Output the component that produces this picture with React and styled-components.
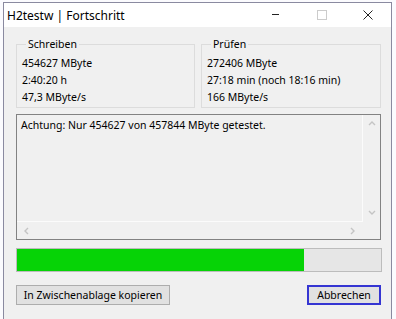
import React from "react";
import styled, { createGlobalStyle } from "styled-components";

const Global = createGlobalStyle`
  html, body { margin: 0; padding: 0; background: #fbfbfe; overflow: hidden; }
  body { font-family: "Noto Sans", "Open Sans", sans-serif; }
`;

const Window = styled.div`
  margin: 2px 0 0 3px;
  width: 387px;
  height: 317px;
  border: 1px solid #8a8aa0;
  border-bottom: none;
  background: #f0f0f0;
  display: flex;
  flex-direction: column;
  overflow: hidden;
`;

const TitleBar = styled.div`
  height: 24px;
  flex: none;
  background: #ffffff;
  display: flex;
  align-items: center;
  padding-left: 3px;
  font-size: 12px;
  color: #000;
`;

const Title = styled.div`
  flex: 1;
  white-space: nowrap;
`;

const Ctrl = styled.div`
  width: ${(p) => p.$w}px;
  height: 24px;
  display: flex;
  align-items: center;
  justify-content: center;
`;

const Client = styled.div`
  padding: 10px 10px 0 12px;
  display: flex;
  flex-direction: column;
  font-size: 10.5px;
  color: #000;
`;

const Groups = styled.div`
  display: grid;
  grid-template-columns: 179px 180px;
  column-gap: 6px;
`;

const Group = styled.fieldset`
  margin: 0;
  padding: 3px 5px 1px 5px;
  border: 1px solid #dcdcdc;
  min-width: 0;
`;

const Legend = styled.legend`
  padding: 0 2px;
  margin-left: 4px;
  line-height: 15px;
`;

const Line = styled.div`
  line-height: 17px;
  white-space: nowrap;
`;

const Memo = styled.div`
  margin-top: 6px;
  height: 124px;
  border: 1px solid #828282;
  display: grid;
  grid-template-columns: 1fr 17px;
  grid-template-rows: 1fr 17px;
`;

const MemoText = styled.div`
  padding: 3px 4px;
  line-height: 15px;
  white-space: nowrap;
  border-right: 1px solid #fbfbfb;
  border-bottom: 1px solid #fbfbfb;
`;

const VBar = styled.div`
  display: flex;
  flex-direction: column;
  justify-content: space-between;
  align-items: center;
  padding: 5px 0;
`;

const HBar = styled.div`
  display: flex;
  justify-content: space-between;
  align-items: center;
  padding: 0 6px;
`;

const Progress = styled.div`
  margin-top: 8px;
  height: 22px;
  width: 364px;
  border: 1px solid #bcbcbc;
  background: #e6e6e6;
  display: flex;
`;

const Fill = styled.div`
  background: #06d306;
  height: 100%;
`;

const Buttons = styled.div`
  margin-top: 13px;
  display: flex;
  justify-content: space-between;
`;

const Button = styled.button`
  font-family: inherit;
  font-size: 10.5px;
  color: #000;
  height: 20px;
  width: ${(p) => p.$w}px;
  padding: 0;
  background: #e1e1e1;
  border: ${(p) => (p.$default ? "2px solid #3535d2" : "1px solid #adadad")};
  box-sizing: border-box;
`;

const Chevron = ({ dir }) => {
  const paths = {
    up: "M1 5 L4 2 L7 5",
    down: "M1 2 L4 5 L7 2",
    left: "M5 1 L2 4 L5 7",
    right: "M2 1 L5 4 L2 7",
  };
  return (
    <svg width="8" height="8" viewBox="0 0 8 8">
      <path d={paths[dir]} fill="none" stroke="#c4c4c4" strokeWidth="1.4" />
    </svg>
  );
};

const progress = 0.788;

export default function App() {
  return (
    <>
      <Global />
      <Window>
        <TitleBar>
          <Title>H2testw | Fortschritt</Title>
          <Ctrl $w={46}>
            <svg width="8" height="2" viewBox="0 0 8 2">
              <rect x="0" y="0" width="7" height="1" fill="#222" />
            </svg>
          </Ctrl>
          <Ctrl $w={46}>
            <svg width="10" height="10" viewBox="0 0 10 10">
              <rect x="0.5" y="0.5" width="9" height="9" fill="none" stroke="#cccccc" />
            </svg>
          </Ctrl>
          <Ctrl $w={46}>
            <svg width="10" height="10" viewBox="0 0 10 10">
              <path d="M0.5 0.5 L9.5 9.5 M9.5 0.5 L0.5 9.5" stroke="#222" strokeWidth="1" />
            </svg>
          </Ctrl>
        </TitleBar>
        <Client>
          <Groups>
            <Group>
              <Legend>Schreiben</Legend>
              <Line>454627 MByte</Line>
              <Line>2:40:20 h</Line>
              <Line>47,3 MByte/s</Line>
            </Group>
            <Group>
              <Legend>Prüfen</Legend>
              <Line>272406 MByte</Line>
              <Line>27:18 min (noch 18:16 min)</Line>
              <Line>166 MByte/s</Line>
            </Group>
          </Groups>
          <Memo>
            <MemoText>Achtung: Nur 454627 von 457844 MByte getestet.</MemoText>
            <VBar>
              <Chevron dir="up" />
              <Chevron dir="down" />
            </VBar>
            <HBar>
              <Chevron dir="left" />
              <Chevron dir="right" />
            </HBar>
            <div />
          </Memo>
          <Progress>
            <Fill style={{ width: `${progress * 100}%` }} />
          </Progress>
          <Buttons>
            <Button $w={154}>In Zwischenablage kopieren</Button>
            <Button $w={74} $default>Abbrechen</Button>
          </Buttons>
        </Client>
      </Window>
    </>
  );
}
